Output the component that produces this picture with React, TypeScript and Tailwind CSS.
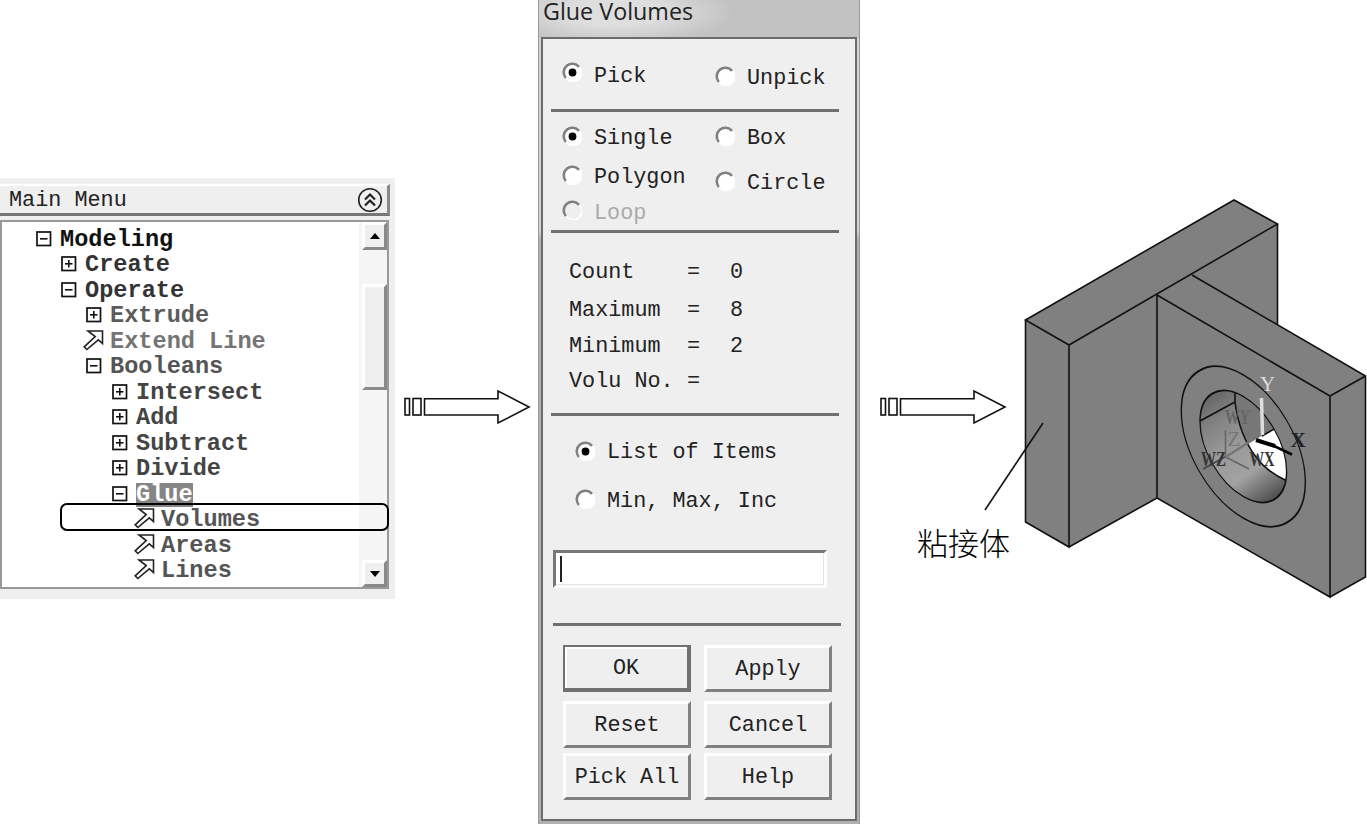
import React from 'react';

type TreeItem = {
  label: string;
  icon: 'plus' | 'minus' | 'arrow';
  indent: string;
  color: string;
  selected?: boolean;
};

const treeItems: TreeItem[] = [
  { label: 'Modeling', icon: 'minus', indent: 'pl-[30px]', color: 'text-[#111]' },
  { label: 'Create', icon: 'plus', indent: 'pl-[55px]', color: 'text-[#333]' },
  { label: 'Operate', icon: 'minus', indent: 'pl-[55px]', color: 'text-[#333]' },
  { label: 'Extrude', icon: 'plus', indent: 'pl-[80px]', color: 'text-[#5c5c5c]' },
  { label: 'Extend Line', icon: 'arrow', indent: 'pl-[80px]', color: 'text-[#747474]' },
  { label: 'Booleans', icon: 'minus', indent: 'pl-[80px]', color: 'text-[#555]' },
  { label: 'Intersect', icon: 'plus', indent: 'pl-[106px]', color: 'text-[#444]' },
  { label: 'Add', icon: 'plus', indent: 'pl-[106px]', color: 'text-[#444]' },
  { label: 'Subtract', icon: 'plus', indent: 'pl-[106px]', color: 'text-[#444]' },
  { label: 'Divide', icon: 'plus', indent: 'pl-[106px]', color: 'text-[#444]' },
  { label: 'Glue', icon: 'minus', indent: 'pl-[106px]', color: 'text-white', selected: true },
  { label: 'Volumes', icon: 'arrow', indent: 'pl-[131px]', color: 'text-[#555]' },
  { label: 'Areas', icon: 'arrow', indent: 'pl-[131px]', color: 'text-[#555]' },
  { label: 'Lines', icon: 'arrow', indent: 'pl-[131px]', color: 'text-[#555]' },
];

const TreeIcon = ({ icon }: { icon: TreeItem['icon'] }) => {
  if (icon === 'arrow') {
    return (
      <svg width="22" height="22" viewBox="0 0 22 22" className="shrink-0 -mt-1" fill="#fff" stroke="#222" strokeWidth="1.6">
        <path d="M6 2H20.5V14.500L16.300 10.800L4.800 20.500L2.200 17.800L13.200 7.600Z" />
      </svg>
    );
  }
  return (
    <svg width="22" height="22" viewBox="0 0 22 22" className="shrink-0 -mt-0.5" fill="none" stroke="#111">
      <rect x="5" y="4" width="13.5" height="13.5" strokeWidth="1.7" />
      <path d="M8 10.8H15.5" strokeWidth="1.6" />
      {icon === 'plus' && <path d="M11.8 7V14.6" strokeWidth="1.6" />}
    </svg>
  );
};

const raised = 'bg-[#efefef] border-[3px] border-t-white border-l-white border-r-[#8a8a8a] border-b-[#8a8a8a]';

const MainMenu = () => (
  <aside className="mt-[178px] h-[421px] w-[395px] shrink-0 bg-[#efefef] pt-[6px] font-['Liberation_Mono',monospace]">
    <div className="flex w-full flex-col">
      <header className="flex h-[32px] w-[390px] items-center justify-between border-t-2 border-r-[3px] border-b-[3px] border-t-white border-r-[#888] border-b-[#777] pl-[9px] pr-[4px]">
        <h1 className="pt-[3px] text-[21.8px] leading-none text-[#222]">Main Menu</h1>
        <svg width="26" height="26" viewBox="0 0 26 26" fill="none" stroke="#222">
          <circle cx="13" cy="13" r="11.3" strokeWidth="1.6" />
          <path d="M8 12.5L13 7.5L18 12.5M8 18.5L13 13.5L18 18.5" strokeWidth="2.2" />
        </svg>
      </header>
      <div className="relative mt-[4px] flex h-[369px] w-[389px] border-2 border-[#999] bg-white">
        <ul className="flex-1 pt-[5px]">
          {treeItems.map((item) => (
            <li key={item.label} className={`flex h-[25.5px] items-center ${item.indent}`}>
              <TreeIcon icon={item.icon} />
              <span
                className={`ml-[6px] text-[23.6px] leading-[24px] font-bold whitespace-pre ${item.color} ${item.selected ? 'bg-[#858585]' : ''}`}
              >
                {item.label}
              </span>
            </li>
          ))}
        </ul>
        <div className="flex w-[28px] flex-col bg-[#f5f5f5] pl-[3px]">
          <div className={`flex h-[28px] items-center justify-center ${raised}`}>
            <svg width="10" height="6"><path d="M0 6L5 0L10 6Z" /></svg>
          </div>
          <div className={`mt-[34px] h-[106px] ${raised}`} />
          <div className={`mt-auto flex h-[27px] items-center justify-center ${raised}`}>
            <svg width="10" height="6"><path d="M0 0L5 6L10 0Z" /></svg>
          </div>
        </div>
        {/* highlight ring around the Volumes entry */}
        <div className="absolute top-[281px] left-[58px] h-[28px] w-[329px] rounded-[7px] border-[2.5px] border-black" />
      </div>
    </div>
  </aside>
);

const FlowArrow = () => (
  <svg width="127" height="36" viewBox="0 0 127 36" fill="#fff" stroke="#111" strokeWidth="1.6">
    <rect x="1" y="9.5" width="4.5" height="16.5" />
    <rect x="9" y="9.5" width="8" height="16.5" />
    <path d="M20.5 9.8H94V2L125 18L94 34V26H20.5Z" />
  </svg>
);

const Radio = ({ label, checked, disabled, offset = 'mt-[3px]', className = '' }: {
  label: string;
  checked?: boolean;
  disabled?: boolean;
  offset?: string;
  className?: string;
}) => (
  <div className={`flex items-start ${className}`}>
    <svg width="20" height="20" viewBox="0 0 20 20" className="shrink-0">
      <circle cx="10.5" cy="10.5" r="8.5" fill={disabled ? '#efefef' : '#fff'} />
      <path d="M3.8 16A8.4 8.4 0 1 1 17 4.8" fill="none" stroke="#808080" strokeWidth="2.6" />
      <path d="M17.6 5A8.6 8.6 0 0 1 4.6 16.8" fill="none" stroke="#fff" strokeWidth="1.6" />
      {checked && <circle cx="10.5" cy="10.5" r="3.9" fill="#000" />}
    </svg>
    <span className={`ml-[12px] leading-[20px] whitespace-pre ${offset} ${disabled ? 'text-[#aaa]' : ''}`}>{label}</span>
  </div>
);

const Rule = ({ className = '' }: { className?: string }) => (
  <div className={`h-[3px] w-[288px] shrink-0 bg-[#707070] ${className}`} />
);

const counters = [
  { name: 'Count', value: '0', height: 'h-[38px]' },
  { name: 'Maximum', value: '8', height: 'h-[36px]' },
  { name: 'Minimum', value: '2', height: 'h-[35px]' },
  { name: 'Volu No.', value: '', height: 'h-[35px]' },
];

const buttons = ['OK', 'Apply', 'Reset', 'Cancel', 'Pick All', 'Help'];

const GlueDialog = () => (
  <section className="h-[824px] w-[322px] shrink-0 border-x border-[#999] bg-[linear-gradient(#c2c2c2,#c2c2c2_37px,#d4d4d4_38px,#d4d4d4_230px,#b0b0b0_240px)]">
    <h2 className="h-[37px] bg-[radial-gradient(ellipse_120px_34px_at_75px_12px,#dedede_40%,transparent)] pl-[4px] font-['Open_Sans',sans-serif] text-[23.3px] leading-[22px] text-[#222]">
      Glue Volumes
    </h2>
    <div className="ml-[2px] flex h-[784px] w-[316px] flex-col border-[2.5px] border-[#6c6c6c] bg-[#efefef] font-['Liberation_Mono',monospace] text-[21.8px] text-[#222]">
      <div className="flex h-[70px] pl-[19px]">
        <Radio label="Pick" checked className="mt-[23px] w-[153px]" offset="mt-[5px]" />
        <Radio label="Unpick" className="mt-[27px]" />
      </div>
      <Rule className="ml-[8px]" />
      <div className="flex h-[118px] pl-[19px]">
        <div className="w-[153px]">
          <Radio label="Single" checked className="mt-[14px] h-[39px]" />
          <Radio label="Polygon" className="h-[35px]" />
          <Radio label="Loop" disabled offset="mt-[4px]" />
        </div>
        <div>
          <Radio label="Box" className="mt-[14px] h-[45px]" />
          <Radio label="Circle" />
        </div>
      </div>
      <Rule className="ml-[8px]" />
      <div className="h-[180px] pt-[21px] pl-[26px]">
        {counters.map((row) => (
          <div key={row.name} className={`grid grid-cols-[118px_43px_auto] items-start leading-[38px] ${row.height}`}>
            <span>{row.name}</span>
            <span>=</span>
            <span>{row.value}</span>
          </div>
        ))}
      </div>
      <Rule className="ml-[8px]" />
      <div className="h-[134px] pl-[32px]">
        <Radio label="List of Items" checked className="mt-[25px] h-[48px]" offset="mt-[2px]" />
        <Radio label="Min, Max, Inc" offset="mt-[3px]" />
      </div>
      <div className="ml-[10px] h-[38px] w-[274px] shrink-0 border-[3px] border-t-[#777] border-r-white border-b-white border-l-[#777] bg-white pt-[3px] pl-[4px] shadow-[inset_-1px_-1px_#e4e4e4]">
        <div className="h-[26px] w-[2px] bg-[#222]" />
      </div>
      <Rule className="mt-[35px] ml-[10px]" />
      <div className="mt-[19px] ml-[20px] grid w-[269px] grid-cols-[128px_128px] grid-rows-[47px_47px_47px] gap-x-[13px] gap-y-[7px]">
        {buttons.map((name, index) => (
          <button
            key={name}
            className={`pt-[4px] ${index === 2 || index === 3 ? 'relative top-[2px]' : ''} ${
              index === 0
                ? 'border-2 border-r-[4px] border-b-[4px] border-[#707070] bg-[#efefef] shadow-[inset_2px_2px_#fff]'
                : 'border-[3px] border-t-white border-r-[#808080] border-b-[#808080] border-l-white bg-[#efefef]'
            }`}
          >
            {name}
          </button>
        ))}
      </div>
    </div>
  </section>
);

const Model = () => (
  <svg width="357" height="420" viewBox="1010 190 357 420" className="mt-[190px] shrink-0 overflow-visible" fill="none" stroke="#111" strokeWidth="1.6">
    <defs>
      <linearGradient id="bore" x1="0.2" y1="0" x2="0.75" y2="1">
        <stop offset="0" stopColor="#606060" />
        <stop offset="0.22" stopColor="#808080" />
        <stop offset="0.45" stopColor="#989898" />
        <stop offset="0.7" stopColor="#a2a2a2" />
        <stop offset="0.95" stopColor="#555" />
      </linearGradient>
      <clipPath id="hole">
        <circle r="50" transform="matrix(0.866 0.5 0 1 1243.3 446.5)" />
      </clipPath>
    </defs>

    {/* base plate */}
    <path d="M1025.500 320L1234 200L1277.500 224V325L1157 498L1069 547L1025.500 522Z" fill="#808080" stroke="none" />
    <path d="M1157 295L1192 275L1365.500 376V577L1330 597L1157 498Z" fill="#808080" stroke="none" />
    <path d="M1025.500 320L1234 200L1277.500 224L1069 345ZM1025.500 320V522L1069 547V345M1277.500 224V325M1069 547L1157 498" />
    {/* upright plate */}
    <path d="M1157 295V498L1330 597V396L1157 295M1192 275L1365.500 376V577L1330 597M1330 396L1365.500 376" />

    {/* bore */}
    <g clipPath="url(#hole)">
      <rect x="1195" y="385" width="96" height="124" fill="url(#bore)" stroke="none" />
      <path d="M1235 385V402C1237 418 1242 432 1249 444L1276 428L1295 420V385Z" fill="#777" stroke="none" />
      <path d="M1248.500 443L1274 429L1292 445V483L1287 481C1274 475 1264 468 1256 457C1253 453 1251 449 1248.500 443Z" fill="#fff" stroke="none" />
      <path d="M1200 421L1235 402V388M1235 402C1238 425 1246 444 1256 457C1264 468 1274 475 1287 481M1262 436L1276 428" />
    </g>
    <circle r="50" transform="matrix(0.866 0.5 0 1 1243.3 446.5)" />
    <circle r="71.600" transform="matrix(0.866 0.5 0 1 1243.3 446.5)" />

    {/* axes */}
    <path d="M1225.500 430V457L1249 469" stroke="#666" />
    <path d="M1225.500 457L1262 434" stroke="#777" strokeWidth="2.5" />
    <path d="M1225 457L1203 469" stroke="#444" />
    <path d="M1261.500 398L1262.500 435" stroke="#ddd" strokeWidth="3.5" />
    <path d="M1256 440L1275 446" stroke="#000" strokeWidth="4" />
    <path d="M1274 446L1292 454.500" stroke="#000" strokeWidth="2.5" />
    <g stroke="none" fontFamily="Liberation Serif, serif" fontSize="21" fontWeight="bold" textAnchor="middle">
      <text x="1267.500" y="391" fill="#ddd" fontWeight="normal">Y</text>
      <text x="1298" y="447" fill="#222">X</text>
      <text x="1234" y="446" fill="#777" fontWeight="normal">Z</text>
      <text x="1237.500" y="424" fill="#666" textLength="25" lengthAdjust="spacingAndGlyphs">WY</text>
      <text x="1213.500" y="466" fill="#333" textLength="25" lengthAdjust="spacingAndGlyphs">WZ</text>
      <text x="1262" y="466" fill="#333" textLength="25" lengthAdjust="spacingAndGlyphs">WX</text>
    </g>

    {/* leader line */}
    <path d="M985 510L1043 423" />
  </svg>
);

const App = () => (
  <main className="flex h-[824px] w-[1367px] overflow-hidden bg-white">
    <MainMenu />
    <div className="w-[143px] shrink-0 pt-[389px] pl-[9px]">
      <FlowArrow />
    </div>
    <GlueDialog />
    <div className="w-[150px] shrink-0 pt-[389px] pl-[20px]">
      <FlowArrow />
      <p className="mt-[94px] ml-[37px] w-[100px] font-['Noto_Sans_CJK_SC',sans-serif] text-[31px] leading-[46px] font-light whitespace-nowrap text-black">粘接体</p>
    </div>
    <Model />
  </main>
);

export default App;
